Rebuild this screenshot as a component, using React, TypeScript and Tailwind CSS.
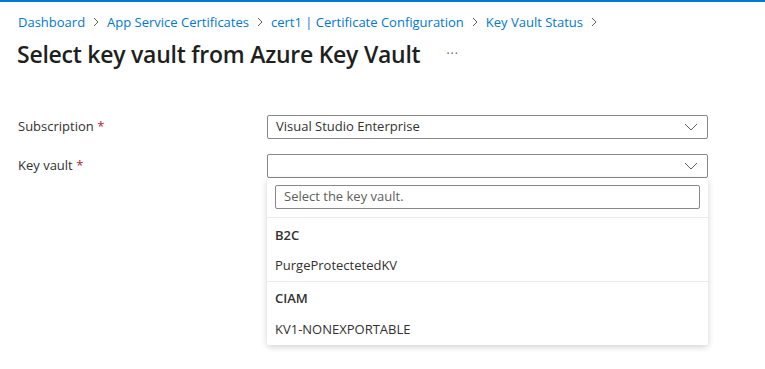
import React from 'react'

const font = { fontFamily: '"Open Sans", "Noto Sans", sans-serif' }

const Crumb = () => (
  <svg width="8" height="10" viewBox="0 0 8 10" className="mx-[7px] shrink-0">
    <path d="M2 1 L6 5 L2 9" fill="none" stroke="#605e5c" strokeWidth="1" />
  </svg>
)

const Chevron = () => (
  <svg width="14" height="8" viewBox="0 0 14 8" className="shrink-0">
    <path d="M1 1 L7 7 L13 1" fill="none" stroke="#605e5c" strokeWidth="1" />
  </svg>
)

const crumbs = [
  'Dashboard',
  'App Service Certificates',
  'cert1 | Certificate Configuration',
  'Key Vault Status',
]

export default function App() {
  return (
    <div className="w-[765px] h-[369px] bg-white overflow-hidden text-[#323130]" style={font}>
      <div className="h-[2px] bg-[#0078d4]" />

      {/* breadcrumb */}
      <div className="flex items-center pl-[18px] pt-[10px] h-[30px] text-[13px]">
        {crumbs.map((c) => (
          <React.Fragment key={c}>
            <span className="text-[#0078d4] leading-none whitespace-nowrap">{c}</span>
            <Crumb />
          </React.Fragment>
        ))}
      </div>

      {/* title */}
      <div className="flex items-center pl-[17px] mt-[7px] h-[30px]">
        <h1 className="text-[23px] tracking-[-0.25px] font-semibold text-[#201f1e] leading-none whitespace-nowrap">
          Select key vault from Azure Key Vault
        </h1>
        <span className="ml-[26px] text-[#605e5c] text-[12px] tracking-[1px] leading-none">···</span>
      </div>

      {/* form */}
      <div className="mt-[46px] flex flex-col gap-[15px] text-[13px]">
        <div className="flex items-center h-[24px]">
          <label className="w-[267px] pl-[18px] shrink-0">
            Subscription <span className="text-[#a4262c]">*</span>
          </label>
          <div className="w-[441px] h-[24px] border border-[#8a8886] rounded-[2px] flex items-center justify-between pl-[8px] pr-[9px]">
            <span>Visual Studio Enterprise</span>
            <Chevron />
          </div>
        </div>

        <div className="flex items-start">
          <label className="w-[267px] pl-[18px] shrink-0 h-[24px] flex items-center">
            <span>
              Key vault <span className="text-[#a4262c]">*</span>
            </span>
          </label>
          <div className="w-[441px] flex flex-col">
            <div className="h-[24px] border border-[#8a8886] rounded-[2px] flex items-center justify-end pr-[9px]">
              <Chevron />
            </div>
            <div className="bg-white rounded-[2px] shadow-[0_2px_6px_rgba(0,0,0,0.18)] pb-[1px]">
              <div className="px-[8px] pt-[7px] pb-[8px] border-b border-[#edebe9]">
                <div className="h-[24px] border border-[#8a8886] rounded-[2px] flex items-center pl-[8px] text-[#605e5c]">
                  Select the key vault.
                </div>
              </div>
              <div className="px-[8px] h-[34px] pt-[2px] flex items-center font-semibold">B2C</div>
              <div className="px-[8px] h-[29px] flex items-center pb-[2px]">PurgeProtectetedKV</div>
              <div className="border-t border-[#edebe9] px-[8px] h-[34px] flex items-center font-semibold">CIAM</div>
              <div className="px-[8px] h-[29px] flex items-center">KV1-NONEXPORTABLE</div>
            </div>
          </div>
        </div>
      </div>
    </div>
  )
}
